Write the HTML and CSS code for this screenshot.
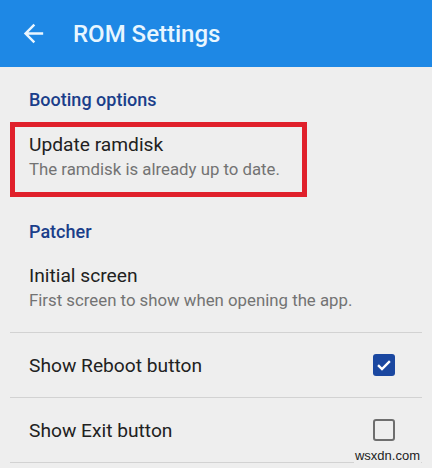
FILE: index.html
```html
<!DOCTYPE html>
<html>
<head>
<meta charset="utf-8">
<link rel="stylesheet" href="styles.css">
</head>
<body>
<div class="screen">
  <header class="appbar">
    <svg class="back" viewBox="0 0 24 24" width="29" height="29"><path d="M20 11H7.83l5.59-5.59L12 4l-8 8 8 8 1.41-1.41L7.83 13H20v-2z" fill="#eaf6ff"/></svg>
    <div class="title">ROM Settings</div>
  </header>

  <div class="category first">Booting options</div>
  <div class="pref p1">
    <div class="ptitle">Update ramdisk</div>
    <div class="psum">The ramdisk is already up to date.</div>
  </div>

  <div class="category second">Patcher</div>
  <div class="pref p2">
    <div class="ptitle">Initial screen</div>
    <div class="psum">First screen to show when opening the app.</div>
  </div>

  <div class="divider d1"></div>
  <div class="row">
    <div class="rtitle">Show Reboot button</div>
    <div class="check on"><svg viewBox="0 0 24 24" width="22" height="22"><path d="M5.5 12.2l4.3 4.2 8.6-8.6" fill="none" stroke="#fff" stroke-width="2.6"/></svg></div>
  </div>
  <div class="divider"></div>
  <div class="row">
    <div class="rtitle">Show Exit button</div>
    <div class="check off"></div>
  </div>
  <div class="divider"></div>

  <div class="highlight"></div>
  <div class="watermark">wsxdn.com</div>
</div>
</body>
</html>
```

FILE: styles.css
```css
html, body {
  margin: 0;
  padding: 0;
  background: #eeeeee;
}
.screen {
  position: relative;
  width: 432px;
  height: 468px;
  overflow: hidden;
  font-family: Roboto, "Noto Sans", sans-serif;
  background: #eeeeee;
}
.appbar {
  height: 67px;
  background: #1e88e5;
  display: flex;
  align-items: center;
}
.back {
  margin-left: 19px;
  display: block;
}
.title {
  margin-left: 25px;
  font-size: 24px;
  font-weight: 500;
  color: #e8f6ff;
  line-height: 28px;
}
.category {
  padding-left: 29px;
  font-size: 18px;
  font-weight: 500;
  line-height: 20px;
  color: #1a3e8a;
}
.category.first { margin-top: 23px; }
.category.second { margin-top: 42px; }
.pref {
  padding: 0 29px;
}
.p1 { margin-top: 22px; }
.p2 { margin-top: 21px; }
.ptitle {
  font-size: 19.2px;
  line-height: 26px;
  color: #212121;
}
.psum {
  font-size: 16.8px;
  line-height: 22px;
  color: #737373;
}
.divider {
  height: 1px;
  margin: 0 10px;
  background: #d2d2d2;
}
.divider.d1 { margin-top: 21px; }
.row {
  height: 64px;
  display: flex;
  align-items: center;
  justify-content: space-between;
  padding: 0 37px 0 29px;
}
.rtitle {
  font-size: 19.2px;
  color: #212121;
}
.check {
  width: 22px;
  height: 22px;
  box-sizing: border-box;
  border-radius: 3px;
}
.check svg { display: block; }
.check.on {
  background: #1a47a0;
}
.check.off {
  border: 2.5px solid #6e6e6e;
}
.highlight {
  position: absolute;
  left: 10px;
  top: 122px;
  width: 297px;
  height: 75px;
  box-sizing: border-box;
  border: 5px solid #e0202b;
}
.watermark {
  position: absolute;
  right: 11px;
  top: 448px;
  font-family: "Liberation Sans", Arial, sans-serif;
  font-size: 13px;
  line-height: 16px;
  color: #222;
  background: #eeeeee;
  padding: 0 1px;
}
```
